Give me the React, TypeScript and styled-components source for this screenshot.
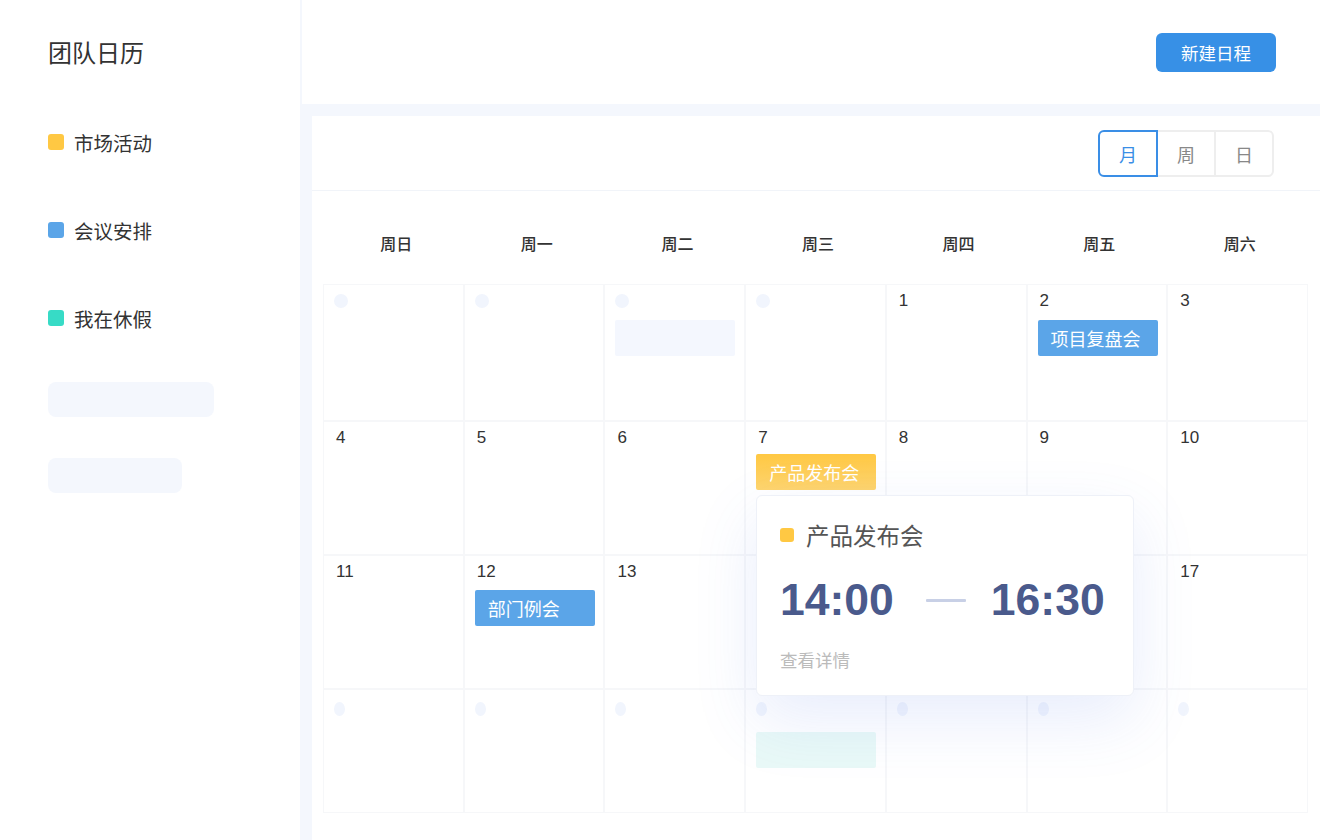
import React from 'react';
import styled, { createGlobalStyle, css } from 'styled-components';

const GlobalStyle = createGlobalStyle`
  html, body { margin: 0; padding: 0; }
  body {
    font-family: "Liberation Sans", "Noto Sans CJK SC", sans-serif;
    color: #333;
    background: #fff;
  }
  * { box-sizing: border-box; }
`;

const Page = styled.div`
  display: flex;
  width: 1320px;
  height: 840px;
  overflow: hidden;
`;

const Sidebar = styled.aside`
  width: 302px;
  flex-shrink: 0;
  background: #fff;
  border-right: 2px solid #f4f7fd;
  padding: 38px 0 0 48px;
`;

const AppTitle = styled.h1`
  margin: 0;
  font-family: "Noto Sans CJK SC", sans-serif;
  font-size: 24px;
  line-height: 28px;
  font-weight: 400;
  color: #333;
`;

const LegendList = styled.ul`
  list-style: none;
  margin: 64px 0 0;
  padding: 0;
  display: flex;
  flex-direction: column;
  gap: 64px;
`;

const LegendItem = styled.li`
  display: flex;
  align-items: center;
  gap: 10px;
  height: 24px;
  font-family: "Noto Sans CJK SC", sans-serif;
  font-size: 19.5px;
  color: #333;
`;

const Swatch = styled.span<{ $color: string; $size?: number }>`
  width: ${(p) => p.$size ?? 16}px;
  height: ${(p) => p.$size ?? 16}px;
  border-radius: 3px;
  background: ${(p) => p.$color};
  flex-shrink: 0;
`;

const SkeletonGroup = styled.div`
  margin-top: 52px;
  display: flex;
  flex-direction: column;
  gap: 41px;
`;

const SkeletonBar = styled.div<{ $w: number }>`
  width: ${(p) => p.$w}px;
  height: 35px;
  border-radius: 8px;
  background: #f4f7fd;
`;

const Main = styled.main`
  flex: 1;
  display: flex;
  flex-direction: column;
  background: #f4f7fd;
  min-width: 0;
`;

const Header = styled.header`
  height: 104px;
  flex-shrink: 0;
  background: #fff;
  display: flex;
  justify-content: flex-end;
  align-items: center;
  padding-right: 44px;
`;

const PrimaryButton = styled.button`
  width: 120px;
  height: 39px;
  border: none;
  border-radius: 6px;
  background: #3790e6;
  color: #fff;
  font-family: "Noto Sans CJK SC", sans-serif;
  font-size: 17.5px;
  cursor: pointer;
`;

const Content = styled.div`
  flex: 1;
  display: flex;
  padding: 12px 0 0 10px;
  min-height: 0;
`;

const Panel = styled.section`
  flex: 1;
  background: #fff;
  display: flex;
  flex-direction: column;
`;

const Toolbar = styled.div`
  height: 75px;
  flex-shrink: 0;
  border-bottom: 1px solid #f1f4f9;
  display: flex;
  justify-content: flex-end;
  align-items: flex-start;
  padding: 14px 46px 0 0;
`;

const Segmented = styled.div`
  display: flex;
`;

const SegButton = styled.button<{ $active?: boolean; $pos: 'first' | 'mid' | 'last' }>`
  width: 60px;
  height: 47px;
  margin-left: -2px;
  background: #fff;
  border: 2px solid #eeeeee;
  font-family: "Noto Sans CJK SC", sans-serif;
  font-size: 18px;
  color: #888;
  position: relative;
  padding: 0;
  cursor: pointer;
  ${(p) => p.$pos === 'first' && css`border-radius: 6px 0 0 6px; margin-left: 0;`}
  ${(p) => p.$pos === 'last' && css`border-radius: 0 6px 6px 0;`}
  ${(p) =>
    p.$active &&
    css`
      border-color: #3a8ee6;
      color: #3a8ee6;
      z-index: 1;
    `}
`;

const WeekHeader = styled.div`
  display: grid;
  grid-template-columns: repeat(7, 1fr);
  height: 93px;
  padding-top: 11px;
  margin: 0 10px 0 14px;
  align-items: center;
`;

const WeekLabel = styled.div`
  text-align: center;
  font-family: "Noto Sans CJK SC", sans-serif;
  font-size: 16px;
  font-weight: 500;
  color: #333;
`;

const GridWrap = styled.div`
  position: relative;
  margin: 0 12px 0 11px;
`;

const MonthGrid = styled.div`
  display: grid;
  grid-template-columns: repeat(7, 1fr);
  grid-template-rows: 137px 134px 134px 124px;
`;

const Cell = styled.div`
  border: 1px solid #f6f7f9;
  padding: 5px 10px;
  display: flex;
  flex-direction: column;
  align-items: flex-start;
  min-width: 0;
`;

const DayNum = styled.div`
  font-size: 17px;
  line-height: 22px;
  height: 22px;
  color: #333;
  padding-left: 2px;
`;

const Dot = styled.div<{ $oval?: boolean }>`
  width: ${(p) => (p.$oval ? 11 : 14)}px;
  height: 14px;
  border-radius: 50%;
  background: #f1f5fd;
  margin: ${(p) => (p.$oval ? '7px 0 0 0' : '4px 0 0 0')};
`;

const chipColors = {
  yellow: 'linear-gradient(180deg, #ffc843 0%, #ffd56e 100%)',
  blue: '#5ba5e8',
  ghost: '#f4f7fe',
  mint: '#e9f9f7',
};

const Chip = styled.div<{ $tone: keyof typeof chipColors; $gap?: number }>`
  width: 120px;
  height: 36px;
  margin-top: ${(p) => p.$gap ?? 8}px;
  border-radius: 2px;
  background: ${(p) => chipColors[p.$tone]};
  color: #fff;
  font-family: "Noto Sans CJK SC", sans-serif;
  font-size: 18px;
  line-height: 36px;
  padding-left: 13px;
  white-space: nowrap;
`;

const Popover = styled.div`
  position: absolute;
  left: 433px;
  top: 211px;
  width: 378px;
  height: 201px;
  background: #fff;
  border: 1px solid #eef1f8;
  border-radius: 6px;
  box-shadow: 0 24px 64px rgba(80, 115, 230, 0.13);
  padding: 24px 23px 0;
  z-index: 2;
`;

const PopTitle = styled.div`
  display: flex;
  align-items: center;
  gap: 12px;
  height: 30px;
  font-family: "Noto Sans CJK SC", sans-serif;
  font-size: 23.5px;
  color: #555;
`;

const TimeRow = styled.div`
  display: flex;
  align-items: center;
  height: 50px;
  margin-top: 25px;
`;

const Time = styled.span`
  font-family: "Liberation Sans", sans-serif;
  font-weight: 700;
  font-size: 44.5px;
  color: #4a5a8c;
`;

const Dash = styled.span`
  width: 40px;
  height: 3px;
  background: #c8d0e6;
  margin: 0 25px 0 32px;
  border-radius: 1px;
`;

const DetailLink = styled.a`
  display: block;
  margin-top: 23px;
  font-family: "Noto Sans CJK SC", sans-serif;
  font-size: 17.5px;
  line-height: 24px;
  color: #bbb;
  text-decoration: none;
`;

type CellData = {
  day?: number;
  dot?: 'round' | 'oval';
  chip?: { tone: keyof typeof chipColors; text?: string; gap?: number };
};

const rows: CellData[][] = [
  [
    { dot: 'round' },
    { dot: 'round' },
    { dot: 'round', chip: { tone: 'ghost', gap: 12 } },
    { dot: 'round' },
    { day: 1 },
    { day: 2, chip: { tone: 'blue', text: '项目复盘会', gap: 8 } },
    { day: 3 },
  ],
  [
    { day: 4 },
    { day: 5 },
    { day: 6 },
    { day: 7, chip: { tone: 'yellow', text: '产品发布会', gap: 5 } },
    { day: 8 },
    { day: 9 },
    { day: 10 },
  ],
  [
    { day: 11 },
    { day: 12, chip: { tone: 'blue', text: '部门例会', gap: 7 } },
    { day: 13 },
    {},
    {},
    {},
    { day: 17 },
  ],
  [
    { dot: 'oval' },
    { dot: 'oval' },
    { dot: 'oval' },
    { dot: 'oval', chip: { tone: 'mint', gap: 16 } },
    { dot: 'oval' },
    { dot: 'oval' },
    { dot: 'oval' },
  ],
];

const weekDays = ['周日', '周一', '周二', '周三', '周四', '周五', '周六'];

export default function App() {
  return (
    <>
      <GlobalStyle />
      <Page>
        <Sidebar>
          <AppTitle>团队日历</AppTitle>
          <LegendList>
            <LegendItem>
              <Swatch $color="#ffc843" />
              市场活动
            </LegendItem>
            <LegendItem>
              <Swatch $color="#5ba5e8" />
              会议安排
            </LegendItem>
            <LegendItem>
              <Swatch $color="#37dbc6" />
              我在休假
            </LegendItem>
          </LegendList>
          <SkeletonGroup>
            <SkeletonBar $w={166} />
            <SkeletonBar $w={134} />
          </SkeletonGroup>
        </Sidebar>
        <Main>
          <Header>
            <PrimaryButton>新建日程</PrimaryButton>
          </Header>
          <Content>
            <Panel>
              <Toolbar>
                <Segmented>
                  <SegButton $active $pos="first">月</SegButton>
                  <SegButton $pos="mid">周</SegButton>
                  <SegButton $pos="last">日</SegButton>
                </Segmented>
              </Toolbar>
              <WeekHeader>
                {weekDays.map((d) => (
                  <WeekLabel key={d}>{d}</WeekLabel>
                ))}
              </WeekHeader>
              <GridWrap>
                <MonthGrid>
                  {rows.flatMap((row, ri) =>
                    row.map((c, ci) => (
                      <Cell key={`${ri}-${ci}`}>
                        {c.day !== undefined && <DayNum>{c.day}</DayNum>}
                        {c.dot && <Dot $oval={c.dot === 'oval'} />}
                        {c.chip && (
                          <Chip $tone={c.chip.tone} $gap={c.chip.gap}>
                            {c.chip.text}
                          </Chip>
                        )}
                      </Cell>
                    ))
                  )}
                </MonthGrid>
                <Popover>
                  <PopTitle>
                    <Swatch $color="#ffc843" $size={14} />
                    产品发布会
                  </PopTitle>
                  <TimeRow>
                    <Time>14:00</Time>
                    <Dash />
                    <Time>16:30</Time>
                  </TimeRow>
                  <DetailLink href="#">查看详情</DetailLink>
                </Popover>
              </GridWrap>
            </Panel>
          </Content>
        </Main>
      </Page>
    </>
  );
}
